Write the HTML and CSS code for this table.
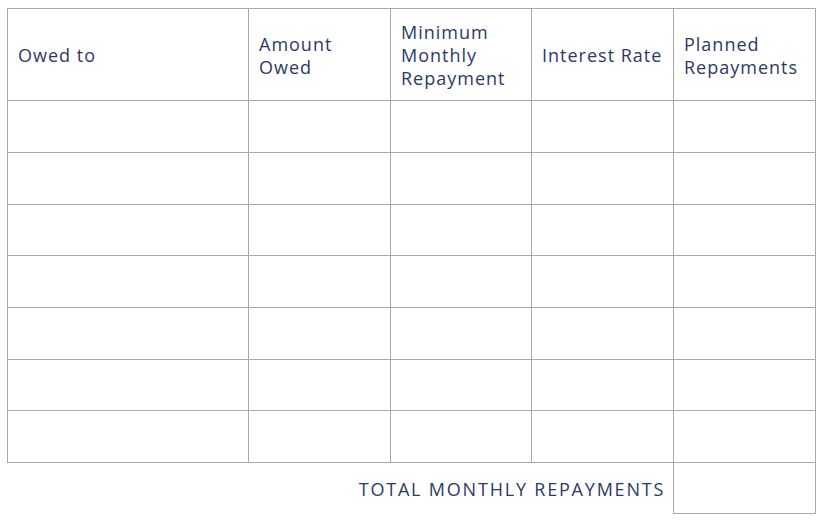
FILE: index.html
```html
<!DOCTYPE html>
<html lang="en">
<head>
<meta charset="utf-8">
<title>Debt repayment plan</title>
<link rel="stylesheet" href="styles.css">
</head>
<body>
<div class="sheet">
  <div class="grid">
    <div class="cell head">Owed to</div>
    <div class="cell head">Amount<br>Owed</div>
    <div class="cell head">Minimum<br>Monthly<br>Repayment</div>
    <div class="cell head">Interest Rate</div>
    <div class="cell head">Planned<br>Repayments</div>

    <div class="cell r52"></div><div class="cell r52"></div><div class="cell r52"></div><div class="cell r52"></div><div class="cell r52"></div>
    <div class="cell r52"></div><div class="cell r52"></div><div class="cell r52"></div><div class="cell r52"></div><div class="cell r52"></div>
    <div class="cell r51"></div><div class="cell r51"></div><div class="cell r51"></div><div class="cell r51"></div><div class="cell r51"></div>
    <div class="cell r52"></div><div class="cell r52"></div><div class="cell r52"></div><div class="cell r52"></div><div class="cell r52"></div>
    <div class="cell r52"></div><div class="cell r52"></div><div class="cell r52"></div><div class="cell r52"></div><div class="cell r52"></div>
    <div class="cell r51"></div><div class="cell r51"></div><div class="cell r51"></div><div class="cell r51"></div><div class="cell r51"></div>
    <div class="cell r52"></div><div class="cell r52"></div><div class="cell r52"></div><div class="cell r52"></div><div class="cell r52"></div>
  </div>
  <div class="footer">
    <div class="total-label">TOTAL MONTHLY REPAYMENTS</div>
    <div class="total-box"></div>
  </div>
</div>
</body>
</html>
```
FILE: styles.css
```css
html, body {
  margin: 0;
  padding: 0;
  background: #ffffff;
}
body {
  font-family: "Open Sans", "Noto Sans", sans-serif;
  color: #2b3a66;
}
.sheet {
  margin: 8px 0 0 7px;
  width: 809px;
}
.grid {
  display: grid;
  grid-template-columns: 241px 142px 141px 142px 142px;
  border-left: 1px solid #a9a9a9;
  border-top: 1px solid #a9a9a9;
}
.cell {
  box-sizing: border-box;
  border-right: 1px solid #a9a9a9;
  border-bottom: 1px solid #a9a9a9;
  padding: 0 8px 0 10px;
}
.head {
  height: 92px;
  padding-top: 2px;
  display: flex;
  align-items: center;
  font-size: 18px;
  line-height: 23px;
  letter-spacing: 1px;
}
.r52 { height: 52px; }
.r51 { height: 51px; }
.footer {
  display: flex;
  padding-left: 1px;
}
.total-label {
  width: 666px;
  box-sizing: border-box;
  padding-right: 8px;
  display: flex;
  align-items: center;
  justify-content: flex-end;
  font-size: 18px;
  letter-spacing: 1.8px;
  height: 51px;
}
.total-box {
  width: 143px;
  height: 51px;
  box-sizing: border-box;
  border-left: 1px solid #a9a9a9;
  border-right: 1px solid #a9a9a9;
  border-bottom: 1px solid #a9a9a9;
}
```
